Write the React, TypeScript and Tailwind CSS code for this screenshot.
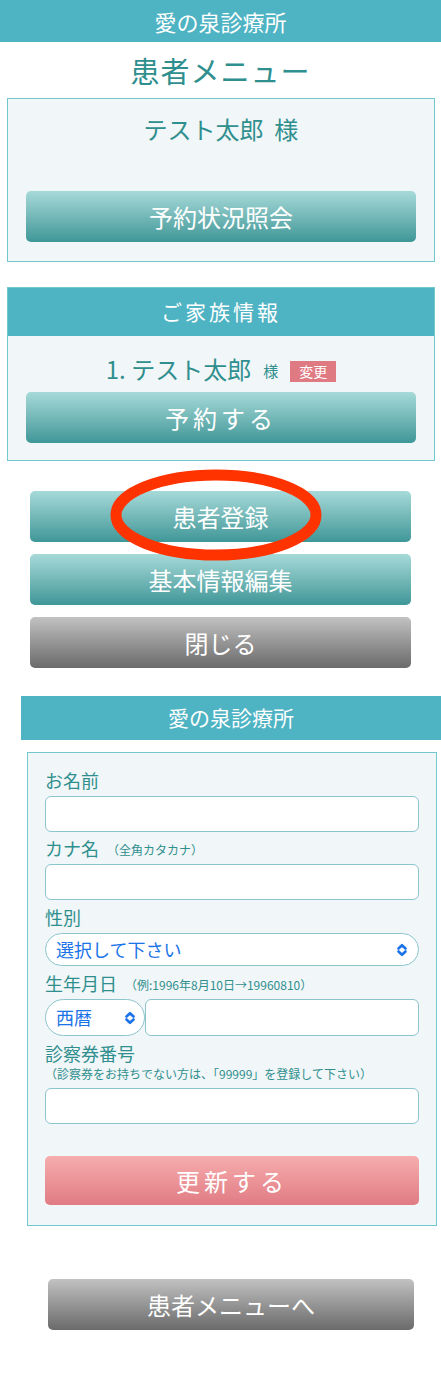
import type { ReactNode } from "react";

const font = { fontFamily: '"Noto Sans CJK JP", "Noto Sans", sans-serif' };

function TealButton({ children, className = "" }: { children: ReactNode; className?: string }) {
  return (
    <div
      className={`flex h-[51px] items-center justify-center rounded-[5px] bg-gradient-to-b from-[#a6dad9] to-[#3e9798] text-[24px] text-white ${className}`}
    >
      {children}
    </div>
  );
}

function GrayButton({ children, className = "" }: { children: ReactNode; className?: string }) {
  return (
    <div
      className={`flex h-[51px] items-center justify-center rounded-[5px] bg-gradient-to-b from-[#c2c2c2] to-[#6b6b6b] text-[24px] text-white ${className}`}
    >
      {children}
    </div>
  );
}

function Chevrons() {
  return (
    <svg width="12" height="14" viewBox="0 0 12 14" fill="none" stroke="#1a73e8" strokeWidth="2.6" strokeLinecap="round" strokeLinejoin="round">
      <path d="M2.5 5.5 L6 2.2 L9.5 5.5" />
      <path d="M2.5 8.5 L6 11.8 L9.5 8.5" />
    </svg>
  );
}

function Label({ children, note }: { children: ReactNode; note?: string }) {
  return (
    <div className="flex items-end text-[18px] leading-[22px] text-[#2f8f8e]">
      <span>{children}</span>
      {note && <span className="mb-[2px] ml-2 text-[12px] leading-[14px]">{note}</span>}
    </div>
  );
}

function TextBox() {
  return <div className="h-[36px] rounded-[6px] border border-[#8cc5cc] bg-white" />;
}

export default function App() {
  return (
    <div className="bg-white" style={font}>
      {/* Header */}
      <header className="flex h-[42px] items-center justify-center bg-[#4eb3c3] text-[22px] text-white">
        愛の泉診療所
      </header>

      <h1 className="mt-[9px] text-center text-[29px] leading-[38px] tracking-[1px] text-[#2f8f8e]">
        患者メニュー
      </h1>

      {/* Patient box */}
      <section className="mx-[7px] mt-[9px] mr-[6px] border border-[#72c7d1] bg-[#f1f6f8] px-[18px] pb-[19px] pt-[14px]">
        <p className="text-center text-[24px] leading-[32px] text-[#2f8f8e]">テスト太郎&nbsp;&nbsp;様</p>
        <TealButton className="mt-[46px]">予約状況照会</TealButton>
      </section>

      {/* Family info */}
      <section className="mx-[7px] mr-[6px] mt-[25px] border border-[#72c7d1] bg-[#f1f6f8]">
        <div className="flex h-[48px] items-center justify-center bg-[#4eb3c3] text-[21px] tracking-[3px] text-white">
          ご家族情報
        </div>
        <div className="px-[18px] pb-[17px] pt-[18px]">
          <div className="flex items-center justify-center text-[#2f8f8e]">
            <span className="text-[24px] leading-[30px]">1. テスト太郎</span>
            <span className="ml-3 mt-1 text-[15px]">様</span>
            <span className="ml-[12px] mt-1 bg-[#e07a82] px-[9px] text-[14px] leading-[21px] text-white">変更</span>
          </div>
          <TealButton className="mt-[8px] tracking-[4px]">予約する</TealButton>
        </div>
      </section>

      {/* Menu buttons */}
      <div className="relative mx-[30px] mt-[30px] flex flex-col gap-[12px]">
        <TealButton>患者登録</TealButton>
        <TealButton>基本情報編集</TealButton>
        <GrayButton>閉じる</GrayButton>
        <svg className="pointer-events-none absolute left-[78px] top-[-23px]" width="216" height="94" viewBox="0 0 216 94">
          <ellipse cx="108" cy="47" rx="100" ry="40" fill="none" stroke="#ff3300" strokeWidth="11" />
        </svg>
      </div>

      {/* Registration form */}
      <div className="ml-[21px] mt-[28px] flex h-[44px] items-center justify-center bg-[#4eb3c3] text-[21px] text-white">
        愛の泉診療所
      </div>

      <section className="ml-[27px] mr-[4px] mt-[12px] border border-[#72c7d1] bg-[#f1f6f8] px-[17px] pb-[20px] pt-[16px]">
        <Label>お名前</Label>
        <div className="mt-[5px]"><TextBox /></div>

        <div className="mt-[5px]"><Label note="（全角カタカナ）">カナ名</Label></div>
        <div className="mt-[5px]"><TextBox /></div>

        <div className="mt-[6px]"><Label>性別</Label></div>
        <div className="mt-[5px] flex h-[33px] items-center justify-between rounded-full border border-[#8cc5cc] bg-white pl-[10px] pr-[10px] text-[18px] text-[#1a73e8]">
          <span>選択して下さい</span>
          <Chevrons />
        </div>

        <div className="mt-[6px]"><Label note="（例:1996年8月10日→19960810）">生年月日</Label></div>
        <div className="mt-[5px] flex">
          <div className="flex h-[37px] w-[100px] items-center justify-between rounded-full border border-[#8cc5cc] bg-white pl-[10px] pr-[8px] text-[18px] text-[#1a73e8]">
            <span>西暦</span>
            <Chevrons />
          </div>
          <div className="h-[37px] flex-1 rounded-[6px] border border-[#8cc5cc] bg-white" />
        </div>

        <div className="mt-[6px]"><Label>診察券番号</Label></div>
        <p className="mt-[2px] text-[12px] leading-[16px] text-[#2f8f8e]">（診察券をお持ちでない方は、「99999」を登録して下さい）</p>
        <div className="mt-[6px]"><TextBox /></div>

        <div className="mt-[32px] flex h-[49px] items-center justify-center rounded-[5px] bg-gradient-to-b from-[#f6adad] to-[#e07b84] text-[24px] tracking-[4px] text-white">
          更新する
        </div>
      </section>

      <div className="pb-[46px] pl-[48px] pr-[27px] pt-[53px]">
        <GrayButton className="h-[50px]">患者メニューへ</GrayButton>
      </div>
    </div>
  );
}
